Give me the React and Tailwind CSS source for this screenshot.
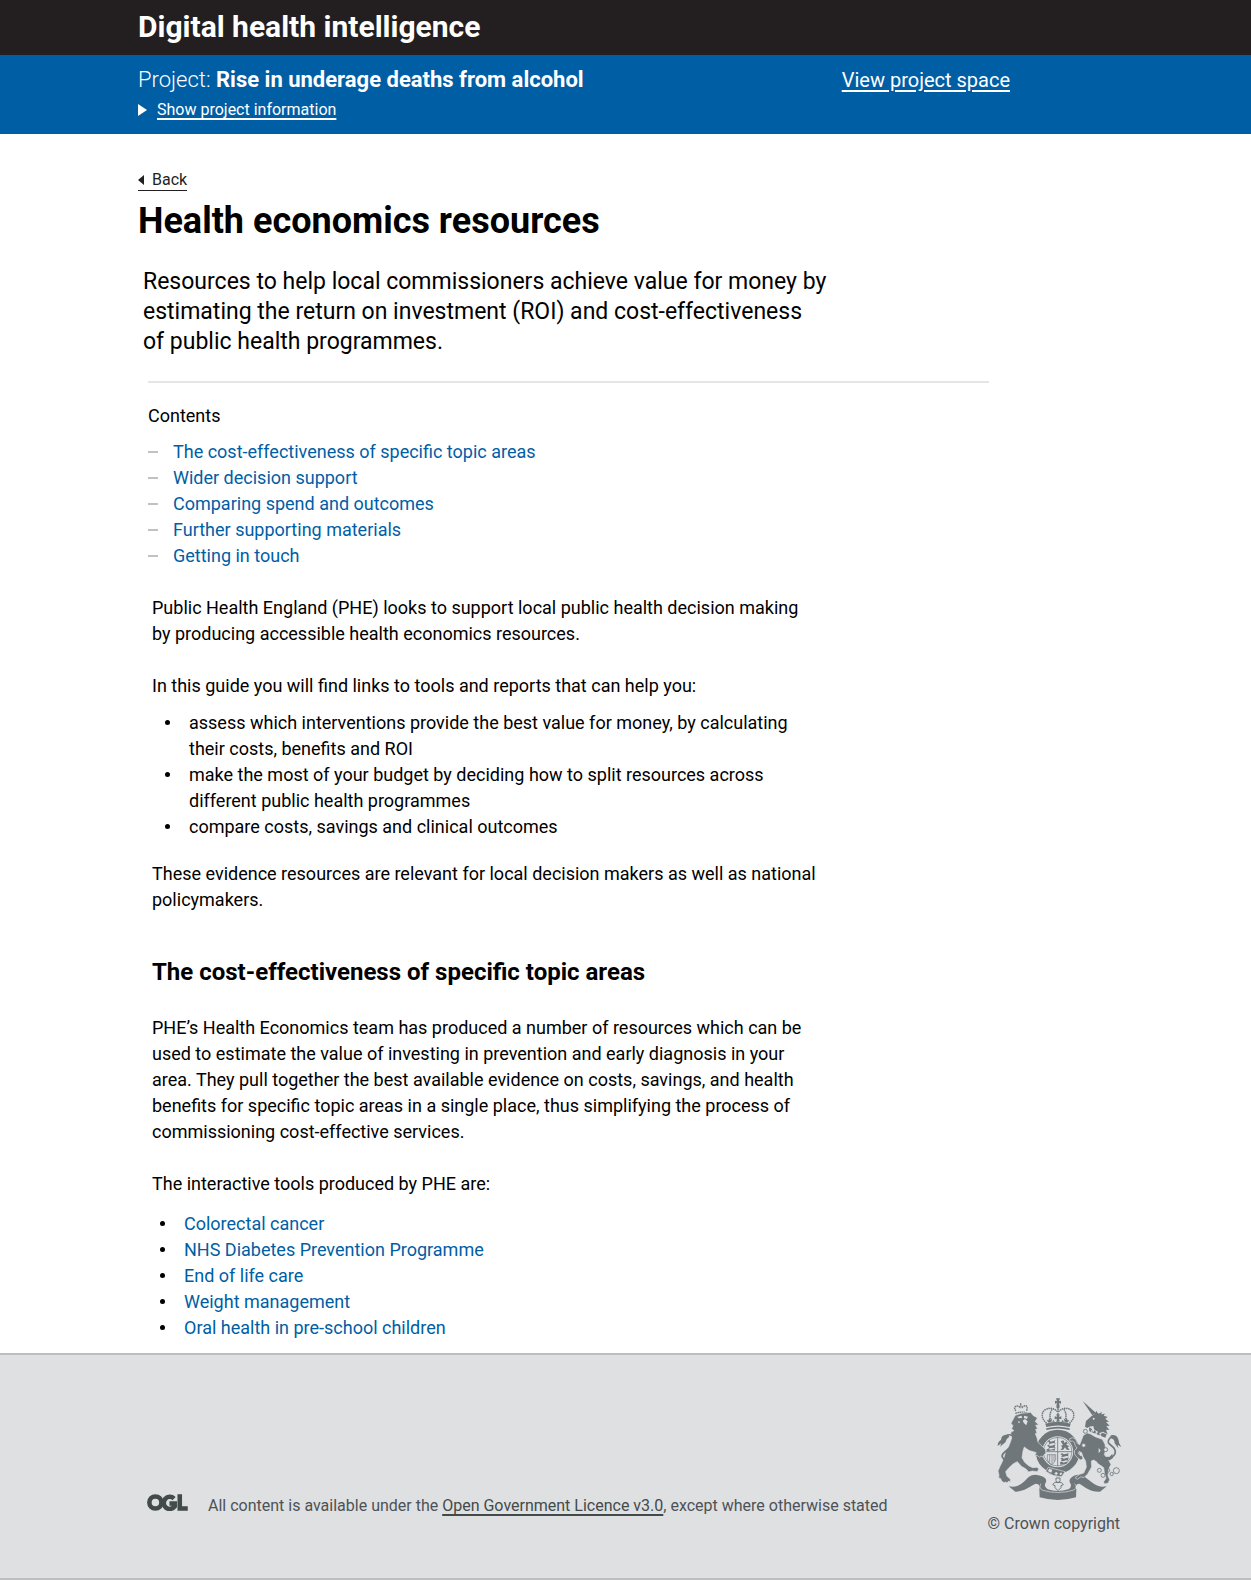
const contents = [
  "The cost-effectiveness of specific topic areas",
  "Wider decision support",
  "Comparing spend and outcomes",
  "Further supporting materials",
  "Getting in touch",
];

const aims = [
  "assess which interventions provide the best value for money, by calculating their costs, benefits and ROI",
  "make the most of your budget by deciding how to split resources across different public health programmes",
  "compare costs, savings and clinical outcomes",
];

const tools = [
  "Colorectal cancer",
  "NHS Diabetes Prevention Programme",
  "End of life care",
  "Weight management",
  "Oral health in pre-school children",
];

function Bullet() {
  return <span aria-hidden="true" className="mt-[10px] size-[5px] shrink-0 rounded-full bg-black" />;
}

function OglLogo() {
  return (
    <svg viewBox="0 0 124 52" className="h-[17px] w-[41px] shrink-0" role="img" aria-label="Open Government Licence">
      <g fill="none" stroke="#434a4a" strokeWidth="14">
        <circle cx="25" cy="26" r="18.5" />
        <path d="M82 14A18.5 18.5 0 1 0 84 38V29H68" />
        <path d="M99.500 1V44.500H124" />
      </g>
    </svg>
  );
}

function Crest() {
  const ink = "#6f777b";
  const paper = "#dee0e2";
  return (
    <svg viewBox="50 50 381 321" className="h-[107px] w-[127px]" role="img" aria-label="Royal coat of arms">
      {/* crown */}
      <g fill={ink}>
        <path d="M233 66l-3-9h12l-3 9 6-2v9l-6-2 2 9h-10l2-9-6 2v-9z" />
        <circle cx="236" cy="83" r="5" />
        <path d="M198 133q38-11 76 0l-3 10q-35-9-70 0zM201 147q35-9 70 0v5q-35-9-70 0z" />
        <path d="M208 130l-6-8 6 1 1-8 5 6 5-4-3 11zM264 130l6-8-6 1-1-8-5 6-5-4 3 11zM231 127l2-9-7 2v-9l7 2-2-8h10l-2 8 7-2v9l-7-2 2 9zM219 128l3-7 4 6zM246 127l4-6 4 7z" />
      </g>
      <g fill="none" stroke={ink} strokeWidth="5" strokeLinecap="round" strokeDasharray=".1 6.300">
        <path d="M200 130C186 118 184 99 198 91S228 88 235 98" />
        <path d="M272 130C286 118 288 99 274 91S244 88 237 98" />
        <path d="M236 90V116M217 92C211 102 211 110 213 118M255 92C261 102 261 110 259 118" />
      </g>

      {/* ribbon */}
      <path d="M88 321C116 328 133 308 148 293Q164 281 188 291Q205 298 199 310Q192 322 205 330Q235 340 267 330Q280 322 272 310Q266 298 284 289Q304 282 318 294C338 309 352 327 382 321L362 337C334 339 314 321 300 313Q286 314 291 331L290 354Q236 370 181 354L180 330Q184 314 169 313C151 321 136 336 108 337Z" fill={ink} />
      <path d="M184 313Q177 323 187 332Q236 347 284 332Q295 322 286 313" fill="none" stroke={paper} strokeWidth="2" />

      {/* garter and shield */}
      <circle cx="235" cy="217" r="56" fill={paper} stroke={ink} strokeWidth="19" />
      <circle cx="235" cy="217" r="43" fill="none" stroke={ink} strokeWidth="2" />
      <path d="M235 174V260M192 217H278" stroke={ink} strokeWidth="2.500" />
      <g fill={ink}>
        <path d="M205 185l5-2 4 4 9-2 5-4-2 8 3 4-7-2-9 2-5 3 2-6zM203 199l5-3 4 4 10-2 6-3-2 8 3 3-7-1-9 1-6 3 2-6zM201 211l5-3 6 3 10-2 6-2-2 7-8-1-10 2-6-1z" />
        <path d="M243 224l6-2 4 3 9-2 6-2-2 7 3 3-8-1-8 2-7 2 2-6zM243 237l6-2 4 3 9-2 6-2-2 7 2 3-7-1-8 2-8 1 2-6zM242 249l6-2 5 3 8-3 4 1-4 6-9 1-9 1z" />
        <path d="M244 186l8-3 4 8 5-5 4 7-5 3 10 4-5 4 6 8-9-1-5-7-5 7-9 1 6-7-4-6 6-2z" />
      </g>
      <path d="M204 226H229V240Q225 252 216 257Q205 250 204 238ZM211 227V249M218 227V254M224 227V246" fill="none" stroke={ink} strokeWidth="2" />
      <path d="M199 276L207 264L257 277L247 292Q222 293 199 276Z" fill={ink} stroke={paper} strokeWidth="2" />
      <path d="M209 268l10 3-3 9-10-4zM225 283l5-6 6 5-5 5zM240 284l5-5 4 4-5 5z" fill={paper} />
      <g fill={paper} stroke={ink} strokeWidth="3">
        <path d="M230 296H242V304L238 309H234L230 304Z" />
        <path d="M236 310Q226 304 220 316L227 319L227 325L236 334L245 325L245 319L252 316Q246 304 236 310Z" />
      </g>

      {/* lion */}
      <path d="M108 102Q126 95 143 101M109 95L105 84Q113 76 122 84Q124 76 129 84Q138 75 144 83L142 95M124 72V80" fill="none" stroke={ink} strokeWidth="4" strokeDasharray="5 1.500" />
      <path d="M108 108l18-6 28 -3 8 10 12 6-3 7-4 4 11 10-9 2 6 11-6 1 4 12-5 1 5 12 3 14 12 11 10 10 2 12-6 4-3 7-6-3-5 4-5-5-9-1 5-8-9-3-15-4-12-10-4 12-3 20 8 14 12 10 12 6 12-1 7 4-2 4-4 5-14-2-11 3-8-9-14-8-12-14-12 6-13 12-10 12 4 14 10 8 0 8-6-1-4 5-4-3-5 2-7-5-3-7-6-3 1-8-3-12 6-14 6-12 6-15 5-17 8-13 7-18 5-16-5-7 2-6 8-3-7-6 4-9-6-7z" fill={ink} stroke={paper} strokeWidth="2" />
      <g fill={paper}>
        <path d="M113 113l13-4 3 6-9 2zM134 109l12 3-4 7-8-3zM130 124l7-5 8 7-4 12-7-6zM117 125l6 4-6 3z" />
        <path d="M136 216l9-8 8 12 2 10-9-1-5 9-4 4-1-12z" />
      </g>
      <path d="M86 238C73 244 63 232 72 222S104 201 103 182S84 160 70 180" fill="none" stroke={ink} strokeWidth="5" />
      <path d="M86 166Q65 165 65 182q-10 5-10 18l11-8-4 10 16-13q3-12 12-17zM70 240l9-4 9-6 4 10-10 5z" fill={ink} />

      {/* unicorn */}
      <path d="M310 65L350 101L339 108Z" fill={ink} />
      <path d="M320 125l17-15 9-6 5-9 6 8 12-5-4 7 12-2-4 6 12 4-7 5 11 9-9 1 11 11-10 1 9 12-10-1 5 14-14-8-10 4-17-11-2-10-12 2-6 4-7-4z" fill={ink} />
      <path d="M312 168l12-7 10 3 13 8 22 8 8 15 2 17-4 14 10 12 10 17-7 14-2 20 5 12-5 11-11 2-2-7 7-10-5-17-2-15-15-11-14-12-8 3 1 18-12 21-10 10-12-1-9 7-7-5 14-10 12-4 8-17-2-18-8-14-4-12-8-4-3 5 6 7 7 2 2 8-7 4-10-7-9-11 1-11 7-7-5-7-3-10-6-4-7 1-1-8 9-3 9 5 5 12 7 4z" fill={ink} stroke={paper} strokeWidth="2" />
      <path d="M329 144l8 4 4 11 6-8 5 12 6-8 4 12 7-7 13 5-4 10-48-19z" fill={ink} />
      <g fill={paper}>
        <circle cx="337" cy="155" r="2.500" /><circle cx="350" cy="162" r="2.500" /><circle cx="363" cy="168" r="2.500" />
        <circle cx="343" cy="118" r="3" />
        <path d="M358 205l6 9-6 8zM341 242l12 5-5 7z" />
      </g>
      <path d="M374 238C392 241 412 229 407 212S379 197 389 180S413 176 416 190" fill="none" stroke={ink} strokeWidth="5" />
      <path d="M394 168q18-4 23 12 0 11 9 23l-11-7 2 11-11-15q0-13-12-15zM376 233l15-1 8-9 2 13-10 7-14 1z" fill={ink} />
      <g fill="none" stroke={ink} strokeWidth="2.500">
        <circle cx="318" cy="156" r="6" /><circle cx="364" cy="250" r="5" /><circle cx="360" cy="273" r="6" />
        <circle cx="371" cy="288" r="6" /><circle cx="385" cy="273" r="6" /><circle cx="397" cy="284" r="5" />
        <circle cx="411" cy="274" r="9" />
      </g>
      <g fill={paper} stroke={ink} strokeWidth="2.500">
        <circle cx="313" cy="198" r="6" /><circle cx="379" cy="211" r="6" />
      </g>
    </svg>
  );
}

export default function App() {
  return (
    <div className="flex min-h-screen flex-col bg-white font-['Roboto','Liberation_Sans',sans-serif] text-[18px] leading-[26px] text-black">
      <header className="text-white">
        <div className="bg-[#231f20]">
          <div className="mx-auto max-w-[995px] px-[10px] pt-[7px] pb-2">
            <p className="text-[30px] leading-10 font-bold">Digital health intelligence</p>
          </div>
        </div>
        <div className="bg-[#005ea5]">
          <div className="mx-auto flex max-w-[995px] items-start justify-between pt-[11px] pr-[113px] pb-3 pl-[10px]">
            <div>
              <p className="text-[22px] leading-7">
                <span className="font-light">Project:</span> <strong className="font-bold">Rise in underage deaths from alcohol</strong>
              </p>
              <button type="button" className="mt-1 flex items-center gap-[10px] text-[16px] leading-6">
                <svg viewBox="0 0 9 12" className="h-3 w-[9px]" aria-hidden="true">
                  <path d="M0 0L9 6L0 12Z" fill="#fff" />
                </svg>
                <span className="underline decoration-2 underline-offset-[3px]">Show project information</span>
              </button>
            </div>
            <a href="#project" className="text-[20px] leading-7 underline decoration-2 underline-offset-[3px]">
              View project space
            </a>
          </div>
        </div>
      </header>

      <main className="mx-auto w-full max-w-[995px] px-[10px] pt-9 pb-3">
        <a href="#back" className="flex w-fit items-center gap-2 border-b border-[#231f20] text-[16px] leading-5 text-[#231f20]">
          <svg viewBox="0 0 6 10" className="h-[10px] w-[6px]" aria-hidden="true">
            <path d="M6 0V10L0 5Z" fill="#231f20" />
          </svg>
          Back
        </a>
        <h1 className="mt-[10px] text-[36px] leading-10 font-bold">Health economics resources</h1>
        <p className="mt-[26px] ml-[5px] max-w-[690px] text-[23px] leading-[30px]">
          Resources to help local commissioners achieve value for money by estimating the return on investment (ROI) and
          cost-effectiveness of{"\u00a0"}public health programmes.
        </p>
        <hr className="mt-6 ml-[10px] max-w-[841px] border-t-2 border-[#e5e5e5]" />

        <nav aria-labelledby="contents" className="mt-5 ml-[10px]">
          <h2 id="contents">Contents</h2>
          <ul className="mt-[10px]">
            {contents.map((item) => (
              <li key={item} className="flex items-center gap-[15px]">
                <span aria-hidden="true" className="h-[2px] w-[10px] bg-[#bfc1c3]" />
                <a href="#section" className="text-[#005ea5]">{item}</a>
              </li>
            ))}
          </ul>
        </nav>

        <div className="mt-[26px] ml-[14px] max-w-[672px]">
          <p>
            Public Health England (PHE) looks to support local public health decision making by{"\u00a0"}producing
            accessible health economics resources.
          </p>
          <p className="mt-[26px]">In this guide you will find links to tools and reports that can help you:</p>
          <ul className="mt-[11px] pl-[13px]">
            {aims.map((item) => (
              <li key={item} className="flex gap-[19px]">
                <Bullet />
                <span>{item}</span>
              </li>
            ))}
          </ul>
          <p className="mt-[21px]">
            These evidence resources are relevant for local decision makers as well as national policymakers.
          </p>

          <h2 className="mt-11 text-[24px] leading-[30px] font-bold">The cost-effectiveness of specific topic areas</h2>
          <p className="mt-7">
            PHE’s Health Economics team has produced a number of resources which can be used to estimate the value of
            investing in prevention and early diagnosis in your area. They pull together the best available evidence on
            costs, savings, and health benefits for specific topic areas in a single place, thus simplifying the process
            of commissioning cost-effective services.
          </p>
          <p className="mt-[26px]">The interactive tools produced by PHE are:</p>
          <ul className="mt-[14px] pl-2">
            {tools.map((item) => (
              <li key={item} className="flex gap-[19px]">
                <Bullet />
                <a href="#tool" className="text-[#005ea5]">{item}</a>
              </li>
            ))}
          </ul>
        </div>
      </main>

      <footer className="grow border-t-2 border-b-2 border-[#bcbec0] bg-[#dee0e2] text-[16px] leading-6 text-[#4d5256]">
        <div className="mx-auto flex max-w-[995px] items-end justify-between gap-6 pt-[41px] pb-10 pl-[19px]">
          <div className="mb-[18px] flex items-start gap-5">
            <OglLogo />
            <p>
              All content is available under the{" "}
              <a href="#licence" className="text-[#434a4a] underline decoration-2 underline-offset-[3px]">
                Open Government Licence v3.0
              </a>
              , except where otherwise stated
            </p>
          </div>
          <div className="flex flex-col items-end">
            <Crest />
            <p className="mt-[9px] pr-[3px]">© Crown copyright</p>
          </div>
        </div>
      </footer>
    </div>
  );
}
